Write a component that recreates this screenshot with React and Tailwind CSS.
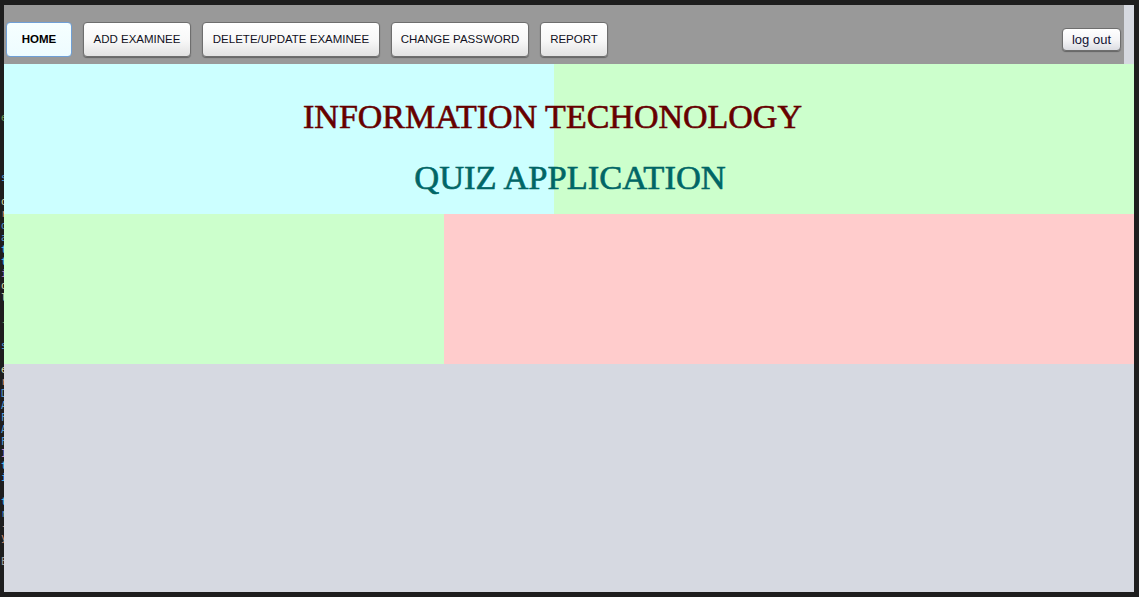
import React from "react";

const codeLines = [
  ["", ""], ["", ""], ["", ""], ["", ""], ["", ""],
  ["#6a9955", "e"], ["", ""], ["", ""], ["", ""], ["", ""],
  ["#569cd6", "s"], ["", ""], ["#dcdcaa", "o"], ["#ce9178", "r"], ["#569cd6", "o"],
  ["#569cd6", "a"], ["#4fc1ff", "t"], ["#4fc1ff", "t"], ["#c586c0", "i"], ["#dcdcaa", "o"],
  ["#dcdcaa", "l"], ["", ""], ["#6a9955", "-"], ["", ""], ["#569cd6", "s"],
  ["", ""], ["#dcdcaa", "e"], ["#ce9178", "r"], ["#569cd6", "D"], ["#569cd6", "A"],
  ["#569cd6", "F"], ["#569cd6", "A"], ["#569cd6", "F"], ["#c586c0", "I"], ["#4fc1ff", "t"],
  ["#4fc1ff", "i"], ["", ""], ["#4fc1ff", "t"], ["#569cd6", "r"], ["#ce9178", "-"],
  ["#ce9178", "y"], ["", ""], ["#9d9d9d", "E"],
];

function Btn({ children, w, active }) {
  return (
    <div
      className={
        "h-[35px] flex items-center justify-center rounded-[4px] border text-[11.5px] " +
        (active
          ? "border-[#6f9fd6] bg-[linear-gradient(#f6ffff,#eefcff)] font-bold text-black"
          : "border-[#6e6e6e] bg-[linear-gradient(#ffffff_0%,#f7f7f7_55%,#e2e2e2_100%)] text-[#111122] shadow-[0_1px_1px_rgba(0,0,0,0.35)]")
      }
      style={{ width: w }}
    >
      {children}
    </div>
  );
}

export default function App() {
  return (
    <div
      className="w-[1139px] h-[597px] bg-[#1e1e1e] flex overflow-hidden"
      style={{ fontFamily: '"Liberation Sans", Arial, sans-serif' }}
    >
      <div className="w-[4px] shrink-0 overflow-hidden pt-[52px] flex flex-col items-end">
        {codeLines.map(([c, t], i) => (
          <div
            key={i}
            className="h-[12px] leading-[12px] text-[10px] whitespace-nowrap -mr-[3px]"
            style={{ color: c || "transparent", fontFamily: '"DejaVu Sans Mono", monospace' }}
          >
            {t || "\u00a0"}
          </div>
        ))}
      </div>
      <div className="flex-1 flex flex-col pt-[5px] pb-[5px] pr-[5px]">
        <div className="h-[59px] flex shrink-0">
          <div className="flex-1 bg-[#999999] flex items-start">
            <div className="flex gap-[11px] pt-[17px] pl-[2px]">
              <Btn w={66} active>HOME</Btn>
              <Btn w={108}>ADD EXAMINEE</Btn>
              <Btn w={178}>DELETE/UPDATE EXAMINEE</Btn>
              <Btn w={138}>CHANGE PASSWORD</Btn>
              <Btn w={68}>REPORT</Btn>
            </div>
            <div className="ml-auto mr-[3px] mt-[23px] w-[59px] h-[23px] flex items-center justify-center rounded-[4px] border border-[#6e6e6e] bg-[linear-gradient(#ffffff_0%,#f4f4f6_55%,#dcdde2_100%)] text-[13px] text-[#111133] shadow-[0_1px_1px_rgba(0,0,0,0.35)]">
              log out
            </div>
          </div>
          <div className="w-[10px] bg-[#d6d9e0]" />
        </div>
        <div
          className="h-[150px] shrink-0 bg-[linear-gradient(to_right,#ccffff_550px,#ccffcc_550px)] pt-[23px] flex flex-col items-center"
          style={{ fontFamily: '"Liberation Serif", "Times New Roman", serif' }}
        >
          <div className="text-[34px] leading-[60px] text-[#660000] pr-[33px] whitespace-nowrap [-webkit-text-stroke:0.6px_#660000]">
            INFORMATION TECHONOLOGY
          </div>
          <div className="text-[34.5px] leading-[60px] text-[#006666] pl-[2px] whitespace-nowrap [-webkit-text-stroke:0.6px_#006666]">
            QUIZ APPLICATION
          </div>
        </div>
        <div className="h-[150px] shrink-0 flex">
          <div className="w-[440px] bg-[#ccffcc]" />
          <div className="flex-1 bg-[#ffcccc]" />
        </div>
        <div className="flex-1 bg-[#d6d9e1]" />
      </div>
    </div>
  );
}
